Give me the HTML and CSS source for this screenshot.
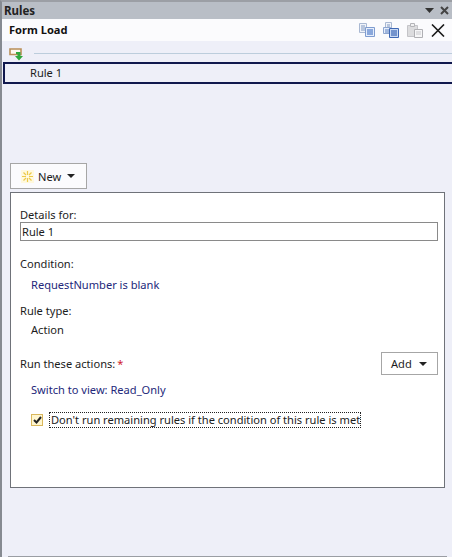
FILE: index.html
```html
<!DOCTYPE html>
<html>
<head>
  <title>Rules</title>
  <meta charset="utf-8">
  <link rel="stylesheet" href="styles.css">
</head>
<body>
<div class="pane">
  <div class="titlebar">
    <span class="title">Rules</span>
    <span class="pane-tools">
      <svg width="9" height="5" viewBox="0 0 9 5"><path d="M0 0h9L4.500 5z" fill="#333"/></svg>
      <svg width="9" height="9" viewBox="0 0 9 9"><path d="M1 1l7 7M8 1L1 8" stroke="#444" stroke-width="2"/></svg>
    </span>
  </div>
  <div class="form-head">
    <b>Form Load</b>
    <span class="head-tools">
      <svg width="16" height="14" viewBox="0 0 16 14">
        <path d="M.5.5h7v9h-7z" fill="#f0f3f9" stroke="#a9b8d2"/>
        <path d="M2 3h4M2 5h4M2 7h4" stroke="#7f97c0"/>
        <path d="M6.500 4.500h9v9h-9z" fill="#e6eefb" stroke="#7f9ccf"/>
        <path d="M8 7h6M8 9h6M8 11h6" stroke="#2f62bd"/>
      </svg>
      <svg width="16" height="16" viewBox="0 0 16 16">
        <path d="M2.500.5h6v7h-6z" fill="#f0f3f9" stroke="#a9b8d2"/>
        <path d="M4 3h3M4 5h3" stroke="#7f97c0"/>
        <path d="M.5 5.500h7v6h-7z" fill="#e6eefb" stroke="#8ea6d0"/>
        <path d="M2 8h4M2 10h4" stroke="#5c80c0"/>
        <path d="M6.500 6.500h9v9h-9z" fill="#c9d9f3" stroke="#3f68b4"/>
        <path d="M8 9h6M8 11h6M8 13h6" stroke="#1f4ea8"/>
      </svg>
      <svg width="16" height="15" viewBox="0 0 16 15">
        <path d="M.5 2.500h10v11H.5z" fill="#dcdcde" stroke="#c4c4c8"/>
        <path d="M3.500.5h4v3h-4z" fill="#f0f0f1" stroke="#b4b4b8"/>
        <path d="M7.500 6.500h8v8h-8z" fill="#f6f6f7" stroke="#b0b0b4"/>
        <path d="M9 9h5M9 11h5" stroke="#c8c8cc"/>
      </svg>
      <svg width="14" height="13" viewBox="0 0 14 13"><path d="M1 .5l12 12M13 .5l-12 12" stroke="#1a1a1a" stroke-width="1.600"/></svg>
    </span>
  </div>
  <div class="body">
    <div class="rule-group">
      <svg width="15" height="13" viewBox="0 0 15 13">
        <path d="M1 1h11v5.500H1z" fill="#fbf8f0" stroke="#b98f58" stroke-width="1.600"/>
        <path d="M7 4h4.500v4H14l-4 4.500L6 8h2.500V6H7z" fill="#2fa83c"/>
      </svg>
      <span class="rule-line"></span>
    </div>
    <div class="rule-row">Rule 1</div>

    <button class="btn new-btn">
      <svg class="new-star" width="13" height="13" viewBox="0 0 13 13">
        <path d="M6.500 1v4M6.500 8v4M1 6.500h4M8 6.500h4M2.500 2.500l2.500 2.500M8 8l2.500 2.500M10.500 2.500L8 5M5 8l-2.500 2.500" stroke="#ecca4a" stroke-width="1.200"/>
      </svg>
      New
      <span class="caret"></span>
    </button>

    <div class="details">
      <label class="field-label">Details for:</label>
      <input class="name-input" type="text" value="Rule 1">

      <div class="field-label condition-label">Condition:</div>
      <a class="link-text condition-text">RequestNumber is blank</a>

      <div class="field-label type-label">Rule type:</div>
      <div class="type-text">Action</div>

      <div class="actions-row">
        <span>Run these actions:<span class="req">*</span></span>
        <button class="btn add-btn">Add <span class="caret"></span></button>
      </div>
      <a class="link-text action-text">Switch to view: Read_Only</a>

      <div class="check-row">
        <span class="check">
          <svg width="9" height="8" viewBox="0 0 9 8"><path d="M1 4l2.500 2.500L8 1" fill="none" stroke="#222" stroke-width="2"/></svg>
        </span>
        <span class="check-label">Don't run remaining rules if the condition of this rule is met</span>
      </div>
    </div>
  </div>
  <div class="footer-line"></div>
</div>
</body>
</html>
```
FILE: styles.css
```css
html, body {
  margin: 0;
  padding: 0;
  width: 452px;
  height: 557px;
  overflow: hidden;
  background: #eeeff8;
  color: #1c1c1c;
  font: 11.1px "Noto Sans", sans-serif;
}

.pane {
  height: 555px;
  border-top: 2px solid #9c9fa5;
  border-left: 2px solid #868a91;
  background: #eeeff8;
  display: flex;
  flex-direction: column;
}

.titlebar {
  height: 17px;
  background: #b9bec6;
  display: flex;
  align-items: center;
  justify-content: space-between;
  padding: 0 3px 0 2px;
  font-weight: bold;
  color: #222;
}
.title { font-size: 11.5px; }
.pane-tools { display: flex; align-items: center; gap: 6px; }

.form-head {
  height: 22px;
  background: #fbfbfd;
  display: flex;
  align-items: center;
  justify-content: space-between;
  padding: 0 7px 0 7px;
  color: #111;
}
.form-head b { margin-top: -2px; }
.head-tools { display: flex; align-items: center; gap: 8px; }

.body { flex: 1; padding: 0 0 0 1px; display: flex; flex-direction: column; }

.rule-group { height: 21px; display: flex; align-items: center; gap: 10px; padding-left: 6px; }
.rule-group svg { margin-top: 5px; }
.rule-line { flex: 1; height: 1px; margin-top: 3px; background: #bccddc; }

.rule-row {
  height: 18px;
  line-height: 17px;
  border: 2px solid #10184d;
  border-right: 0;
  padding-left: 25px;
  background: #eeeff8;
}

.btn {
  font: inherit;
  color: inherit;
  background: #fbfbfd;
  border: 1px solid #a6a6a6;
  padding: 0;
  display: flex;
  align-items: center;
}
.new-btn { width: 77px; height: 26px; margin: 79px 0 0 7px; padding-left: 10px; gap: 4px; }
.new-star { background: #fff9de; }
.add-btn { width: 57px; height: 23px; padding-left: 9px; gap: 5px; background: #fff; }
.caret {
  display: inline-block;
  border: 4px solid transparent;
  border-top: 4px solid #222;
  border-bottom: 0;
  margin-left: 2px;
}

.details {
  box-sizing: border-box;
  width: 435px;
  height: 296px;
  margin: 3px 0 0 7px;
  border: 1px solid #6f7279;
  background: #fff;
  padding: 14px 6px 0 9px;
  display: flex;
  flex-direction: column;
}
.field-label { display: block; height: 15px; line-height: 15px; }
.name-input {
  box-sizing: border-box;
  width: 418px;
  height: 19px;
  margin: 0;
  padding: 0 1px;
  border: 1px solid #8a8a8a;
  font: inherit;
  color: inherit;
}
.condition-label { margin-top: 15px; }
.link-text { color: #23277a; }
.condition-text { margin: 6px 0 0 11px; height: 15px; line-height: 15px; }
.type-label { margin-top: 11px; }
.type-text { margin: 4px 0 0 11px; height: 15px; line-height: 15px; }
.actions-row {
  display: flex;
  justify-content: space-between;
  align-items: center;
  width: 418px;
  margin-top: 15px;
}
.req { color: #d0202a; margin-left: 2px; }
.action-text { margin: 7px 0 0 11px; height: 15px; line-height: 15px; }
.check-row { display: flex; align-items: center; margin: 15px 0 0 11px; gap: 6px; }
.check {
  box-sizing: border-box;
  width: 12px;
  height: 12px;
  border: 1px solid #d9b75c;
  background: #fff6cf;
  display: flex;
  align-items: center;
  justify-content: center;
}
.check-label {
  border: 1px dotted #222;
  padding: 0 0 0 1px;
  line-height: 14px;
}

.footer-line { height: 1px; margin: 0 5px 0 6px; background: #9a9da3; }
```
